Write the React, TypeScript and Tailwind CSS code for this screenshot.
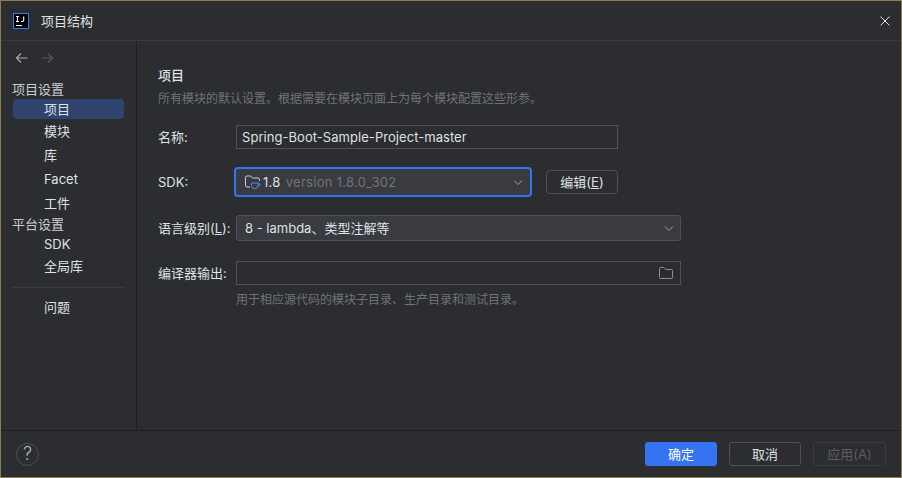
import React from "react";

const font = { fontFamily: '"Inter","Noto Sans CJK SC",sans-serif' };

function Chevron() {
  return (
    <svg width="12" height="12" viewBox="0 0 12 12" fill="none" className="shrink-0">
      <path d="M2 4.5l4 4 4-4" stroke="#9da0a8" strokeWidth="1" />
    </svg>
  );
}

function NavItem({ label, h, active }: { label: string; h: string; active?: boolean }) {
  return (
    <div className={`flex items-center pl-[31px] mx-[12px] w-[111px] rounded-[4px] text-[#dfe1e5] ${h} ${active ? "bg-[#2e436e]" : ""}`}>
      {label}
    </div>
  );
}

export default function App() {
  return (
    <div
      style={font}
      className="w-[902px] h-[478px] flex flex-col bg-[#2b2d30] border border-[#8a7d50] text-[13px] leading-[18px] text-[#dfe1e5] overflow-hidden"
    >
      <div className="h-[40px] shrink-0 flex items-center pl-[12px] pr-[10px] border-b border-[#393b40]">
        <svg width="16" height="16" viewBox="0 0 16 16" className="shrink-0">
          <rect x="0.5" y="0.5" width="15" height="15" fill="#000" stroke="#2f7df6" />
          <rect x="3" y="12" width="6" height="1" fill="#fff" />
          <path d="M3 3.5h3M4.5 3.5v5M3 8.5h3M8 8.5h1.5c.8 0 1.2-.4 1.2-1.2V3.5" stroke="#fff" strokeWidth="1.1" fill="none" />
        </svg>
        <span className="ml-[12px] text-[#dfe1e5]">项目结构</span>
        <svg width="12" height="12" viewBox="0 0 12 12" className="ml-auto" fill="none">
          <path d="M1.5 1.5l9 9M10.5 1.5l-9 9" stroke="#dfe1e5" strokeWidth="1" />
        </svg>
      </div>

      <div className="flex-1 flex min-h-0">
        <aside className="w-[136px] shrink-0 border-r border-[#1e1f22] pt-[9px]">
          <div className="flex items-center gap-[13px] pl-[14px] h-[16px]">
            <svg width="13" height="12" viewBox="0 0 13 12" fill="none">
              <path d="M12.5 6H1.5M6 1.5L1.5 6 6 10.5" stroke="#a8abb0" strokeWidth="1.2" />
            </svg>
            <svg width="13" height="12" viewBox="0 0 13 12" fill="none">
              <path d="M.5 6h11M7 1.5L11.5 6 7 10.5" stroke="#55585e" strokeWidth="1.2" />
            </svg>
          </div>
          <div className="pl-[11px] mt-[14px] h-[18px] leading-[18px] text-[#c9ccd2]">项目设置</div>
          <NavItem label="项目" h="h-[20px] mt-[1px]" active />
          <NavItem label="模块" h="h-[24px]" />
          <NavItem label="库" h="h-[24px]" />
          <NavItem label="Facet" h="h-[24px]" />
          <NavItem label="工件" h="h-[24px]" />
          <div className="pl-[11px] h-[18px] leading-[18px] text-[#c9ccd2]">平台设置</div>
          <NavItem label="SDK" h="h-[22px]" />
          <NavItem label="全局库" h="h-[22px]" />
          <div className="mx-[11px] mt-[10px] h-px bg-[#393b40]" />
          <NavItem label="问题" h="h-[20px] mt-[9px]" />
        </aside>

        <main className="flex-1 pl-[21px] pt-[25px]">
          <div className="h-[18px] text-[#dfe1e5] font-medium">项目</div>
          <div className="h-[18px] mt-[6px] text-[12px] text-[#6f737a]">所有模块的默认设置。根据需要在模块页面上为每个模块配置这些形参。</div>

          <div className="flex items-center mt-[17px] h-[24px]">
            <div className="w-[78px]">名称:</div>
            <div className="w-[382px] h-[24px] flex items-center px-[5px] border border-[#4e5157] text-[#dfe1e5] tracking-[0.05px]">
              Spring-Boot-Sample-Project-master
            </div>
          </div>

          <div className="flex items-center mt-[18px] h-[30px]">
            <div className="w-[76px]">SDK:</div>
            <div className="w-[298px] h-[30px] flex items-center pl-[9px] pr-[6px] rounded-[4px] border-2 border-[#3574f0] bg-[#393b40]">
              <svg width="16" height="16" viewBox="0 0 16 16" fill="none" className="shrink-0">
                <path d="M5 13H2A1.5 1.5 0 0 1 .5 11.5V3.5A1.5 1.5 0 0 1 2 2h3.5l2 2H13a1.5 1.5 0 0 1 1.5 1.5V7" stroke="#ced0d6" />
                <path d="M6.5 9H13v2.5a3 3 0 0 1-3 3h-.5a3 3 0 0 1-3-3zM13 9.5h.8a1 1 0 0 1 0 2.4H13" stroke="#548af7" />
              </svg>
              <span className="ml-[2px] tracking-[0.3px]">1.8</span>
              <span className="ml-[5px] text-[#6f737a] tracking-[0.3px]">version 1.8.0_302</span>
              <span className="ml-auto">
                <Chevron />
              </span>
            </div>
            <div className="ml-[14px] w-[72px] h-[24px] flex items-center justify-center rounded-[4px] border border-[#4e5157]">
              编辑(<span className="underline">E</span>)
            </div>
          </div>

          <div className="flex items-center mt-[18px] h-[26px]">
            <div className="w-[78px] whitespace-nowrap">语言级别(<span className="underline">L</span>):</div>
            <div className="w-[445px] h-[26px] flex items-center pl-[8px] pr-[5px] rounded-[3px] border border-[#4e5157] bg-[#393b40]">
              <span>8 - lambda、类型注解等</span>
              <span className="ml-auto">
                <Chevron />
              </span>
            </div>
          </div>

          <div className="flex items-center mt-[20px] h-[24px]">
            <div className="w-[78px]">编译器输出:</div>
            <div className="w-[445px] h-[24px] flex items-center justify-end pr-[6px] border border-[#4e5157]">
              <svg width="16" height="16" viewBox="0 0 16 16" fill="none">
                <path d="M1.5 3.5a1 1 0 0 1 1-1h3.2l2 2h5.8a1 1 0 0 1 1 1V12.5a1 1 0 0 1-1 1h-11a1 1 0 0 1-1-1z" stroke="#8c8f96" />
              </svg>
            </div>
          </div>
          <div className="ml-[78px] mt-[6px] h-[18px] text-[12px] text-[#6f737a]">用于相应源代码的模块子目录、生产目录和测试目录。</div>
        </main>
      </div>

      <footer className="h-[47px] shrink-0 flex items-center pl-[15px] pr-[15px] border-t border-[#1e1f22]">
        <div className="w-[23px] h-[23px] rounded-full border border-[#4e5157] flex items-center justify-center text-[#b4b8bf] text-[18px] leading-none font-light">?</div>
        <div className="ml-auto w-[72px] h-[24px] flex items-center justify-center rounded-[3px] bg-[#3574f0] text-white">确定</div>
        <div className="ml-[12px] w-[72px] h-[24px] flex items-center justify-center rounded-[3px] border border-[#4e5157]">取消</div>
        <div className="ml-[12px] w-[73px] h-[24px] flex items-center justify-center rounded-[3px] border border-[#393b40] text-[#5a5d63]">应用(A)</div>
      </footer>
    </div>
  );
}
